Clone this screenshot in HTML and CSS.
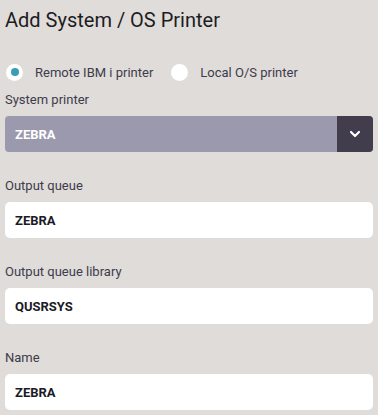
FILE: index.html
```html
<!DOCTYPE html>
<html lang="en">
<head>
<meta charset="utf-8">
<title>Add System / OS Printer</title>
<link rel="stylesheet" href="styles.css">
</head>
<body>
<div class="page">
  <h1 class="title">Add System / OS Printer</h1>
  <div class="radios">
    <label class="radio">
      <span class="dot checked"></span>
      <span class="radio-text">Remote IBM i printer</span>
    </label>
    <label class="radio">
      <span class="dot"></span>
      <span class="radio-text">Local O/S printer</span>
    </label>
  </div>
  <div class="field first">
    <div class="label">System printer</div>
    <div class="select">
      <span class="select-value">ZEBRA</span>
      <span class="select-btn">
        <svg width="12" height="8" viewBox="0 0 12 8"><path d="M2 2 L6 6 L10 2" fill="none" stroke="#fff" stroke-width="2.2" stroke-linecap="round" stroke-linejoin="round"/></svg>
      </span>
    </div>
  </div>
  <div class="field">
    <div class="label">Output queue</div>
    <div class="input">ZEBRA</div>
  </div>
  <div class="field">
    <div class="label">Output queue library</div>
    <div class="input">QUSRSYS</div>
  </div>
  <div class="field">
    <div class="label">Name</div>
    <div class="input">ZEBRA</div>
  </div>
</div>
</body>
</html>
```
FILE: styles.css
```css
html, body {
  margin: 0;
  padding: 0;
  background: #e0dcd9;
  font-family: Roboto, "Liberation Sans", Arial, sans-serif;
}
.page {
  padding: 8px 5px 0 5px;
  display: flex;
  flex-direction: column;
}
.title {
  margin: 0;
  font-size: 20px;
  line-height: 24px;
  font-weight: 400;
  color: #1d1c24;
}
.radios {
  margin-top: 31px;
  display: flex;
  align-items: center;
  height: 18px;
}
.radio {
  display: flex;
  align-items: center;
  font-size: 13px;
  color: #3d3b4c;
}
.radio + .radio {
  margin-left: 17px;
}
.dot {
  width: 17px;
  height: 17px;
  border-radius: 50%;
  background: #fff;
  display: flex;
  align-items: center;
  justify-content: center;
  margin-left: 1px;
  margin-right: 12px;
}
.dot.checked::after {
  content: "";
  width: 8px;
  height: 8px;
  border-radius: 50%;
  background: #3b9db3;
}
.field {
  margin-top: 26px;
  display: flex;
  flex-direction: column;
}
.field.first {
  margin-top: 11px;
}
.label {
  font-size: 13px;
  line-height: 16px;
  color: #3d3b4c;
  margin-bottom: 8px;
}
.select {
  height: 36px;
  border-radius: 4px;
  overflow: hidden;
  background: #9b99ad;
  display: flex;
  align-items: stretch;
}
.select-value {
  flex: 1;
  display: flex;
  align-items: center;
  padding-left: 10px;
  font-size: 13px;
  font-weight: 700;
  color: #fff;
}
.select-btn {
  width: 36px;
  background: #413d4c;
  display: flex;
  align-items: center;
  justify-content: center;
}
.input {
  height: 36px;
  border-radius: 5px;
  background: #fff;
  display: flex;
  align-items: center;
  padding-left: 10px;
  font-size: 13px;
  font-weight: 700;
  color: #1b1a26;
}
```
